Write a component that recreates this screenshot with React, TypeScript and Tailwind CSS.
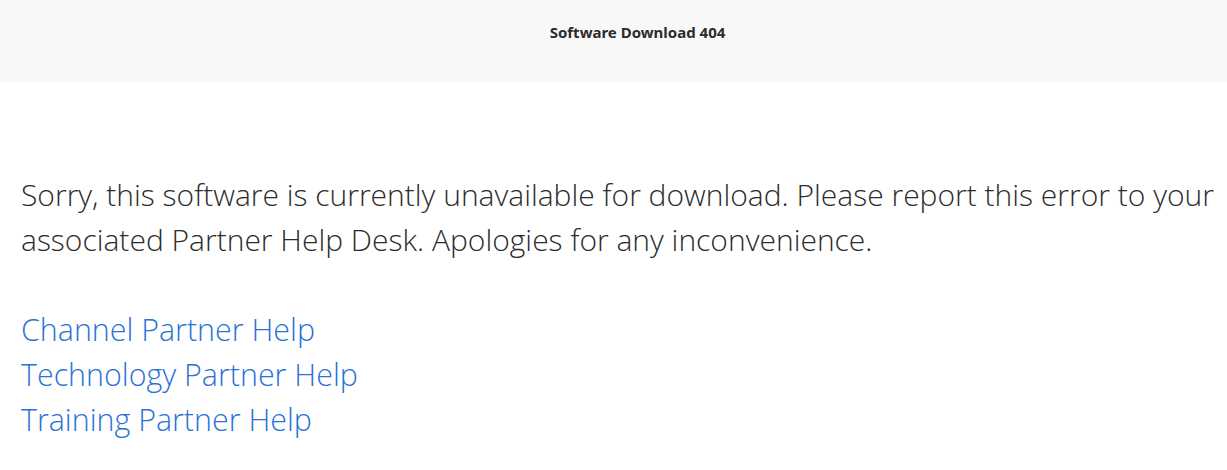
export default function App() {
  return (
    <div className="w-[1227px] h-[470px] bg-white" style={{ fontFamily: '"Open Sans", "Noto Sans", sans-serif' }}>
      <div className="h-[82px] bg-[#f8f8f8] flex justify-center pl-[48px] pt-[21px]">
        <h1 className="text-[15px] leading-[22px] font-bold text-[#2c2c2c]" style={{ fontFamily: '"Noto Sans", sans-serif' }}>Software Download 404</h1>
      </div>
      <div className="pl-[21px] pr-[4px] pt-[90px]">
        <p className="text-[30px] leading-[45px] font-light text-[#2c2c2c]">
          Sorry, this software is currently unavailable for download. Please report this error to your associated Partner Help Desk. Apologies for any inconvenience.
        </p>
        <div className="mt-[45px] flex flex-col items-start text-[30.4px] leading-[45px] font-light text-[#2b72d6]">
          <a href="#">Channel Partner Help</a>
          <a href="#">Technology Partner Help</a>
          <a href="#">Training Partner Help</a>
        </div>
      </div>
    </div>
  );
}
